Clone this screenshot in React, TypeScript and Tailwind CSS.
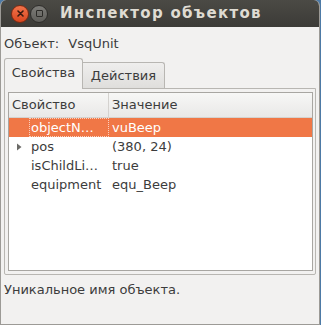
import React from 'react';

export default function App() {
  const rows = [
    { name: 'objectN…', value: 'vuBeep', selected: true },
    { name: 'pos', value: '(380, 24)', expander: true },
    { name: 'isChildLi…', value: 'true' },
    { name: 'equipment', value: 'equ_Beep' },
  ];

  return (
    <div className="w-[321px] h-[325px] bg-[#4d7aa6] overflow-hidden" style={{ fontFamily: '"DejaVu Sans", "Noto Sans", sans-serif' }}>
      <div className="w-[320px] h-[325px] rounded-t-[6px] overflow-hidden flex flex-col bg-[#f2f1f0] border-x border-b border-[#9c9a96]">
        {/* title bar */}
        <div className="h-[27px] shrink-0 flex items-center bg-gradient-to-b from-[#4b4a45] to-[#3c3b37] pl-[10px]">
          <div className="w-[18px] h-[18px] rounded-full bg-gradient-to-b from-[#f2734a] to-[#d9461e] border border-[#7d2a12] flex items-center justify-center">
            <svg width="9" height="9" viewBox="0 0 9 9">
              <path d="M2 2 L7 7 M7 2 L2 7" stroke="#3a1a10" strokeWidth="1.6" strokeLinecap="round" />
            </svg>
          </div>
          <div className="ml-[1px] w-[18px] h-[18px] rounded-full bg-gradient-to-b from-[#7d7c78] to-[#5f5e5a] border border-[#2f2e2b] flex items-center justify-center">
            <div className="w-[7px] h-[7px] border border-[#2c2b28] rounded-[1px]" />
          </div>
          <div className="ml-[12px] text-[15px] font-bold text-[#dfdbd2] tracking-[1.3px]">Инспектор объектов</div>
        </div>

        {/* object label */}
        <div className="h-[31px] flex items-center pl-[3px] pt-[2px] text-[13px] text-[#3c3c3c]">
          <span>Объект:</span>
          <span className="ml-[9px]">VsqUnit</span>
        </div>

        {/* tabs */}
        <div className="flex items-end px-[3px] h-[30px] text-[13px] text-[#3c3c3c]">
          <div className="relative z-10 w-[79px] h-[31px] -mb-[1px] border border-b-0 border-[#b8b6b2] rounded-t-[3px] bg-[#f2f1f0] flex items-center justify-center pb-[2px]">
            Свойства
          </div>
          <div className="w-[82px] h-[26px] border border-b-0 border-l-0 border-[#b8b6b2] rounded-tr-[3px] bg-gradient-to-b from-[#efeeed] to-[#dfdedc] flex items-center justify-center">
            Действия
          </div>
        </div>

        {/* tab pane */}
        <div className="mx-[3px] h-[187px] border border-[#b8b6b2] rounded-b-[2px] p-[3px] pr-[2px]">
          <div className="h-full border border-[#a8a6a2] bg-white flex flex-col text-[13px] text-[#3c3c3c]">
            <div className="h-[25px] flex bg-gradient-to-b from-[#f7f7f6] to-[#e9e8e7] border-b border-[#d4d2cf]">
              <div className="w-[100px] border-r border-[#d4d2cf] flex items-center pl-[3px]">Свойство</div>
              <div className="flex items-center pl-[3px]">Значение</div>
            </div>
            {rows.map((r, i) => (
              <div
                key={i}
                className={`h-[19px] flex items-center ${r.selected ? 'bg-[#f07746] text-white' : ''}`}
              >
                <div className="w-[20px] flex items-center justify-center">
                  {r.expander && (
                    <svg width="6" height="8" viewBox="0 0 6 8">
                      <path d="M1 0.5 L5.5 4 L1 7.5 Z" fill="#6b6a67" />
                    </svg>
                  )}
                </div>
                <div className={`w-[80px] h-full flex items-center pl-[1px] border border-dotted ${r.selected ? 'border-[#fbd0be]' : 'border-transparent'}`}>{r.name}</div>
                <div className="pl-[3px]">{r.value}</div>
              </div>
            ))}
          </div>
        </div>

        {/* status */}
        <div className="pl-[3px] pt-[5px] text-[13px] text-[#3c3c3c]">Уникальное имя объекта.</div>
      </div>
    </div>
  );
}
